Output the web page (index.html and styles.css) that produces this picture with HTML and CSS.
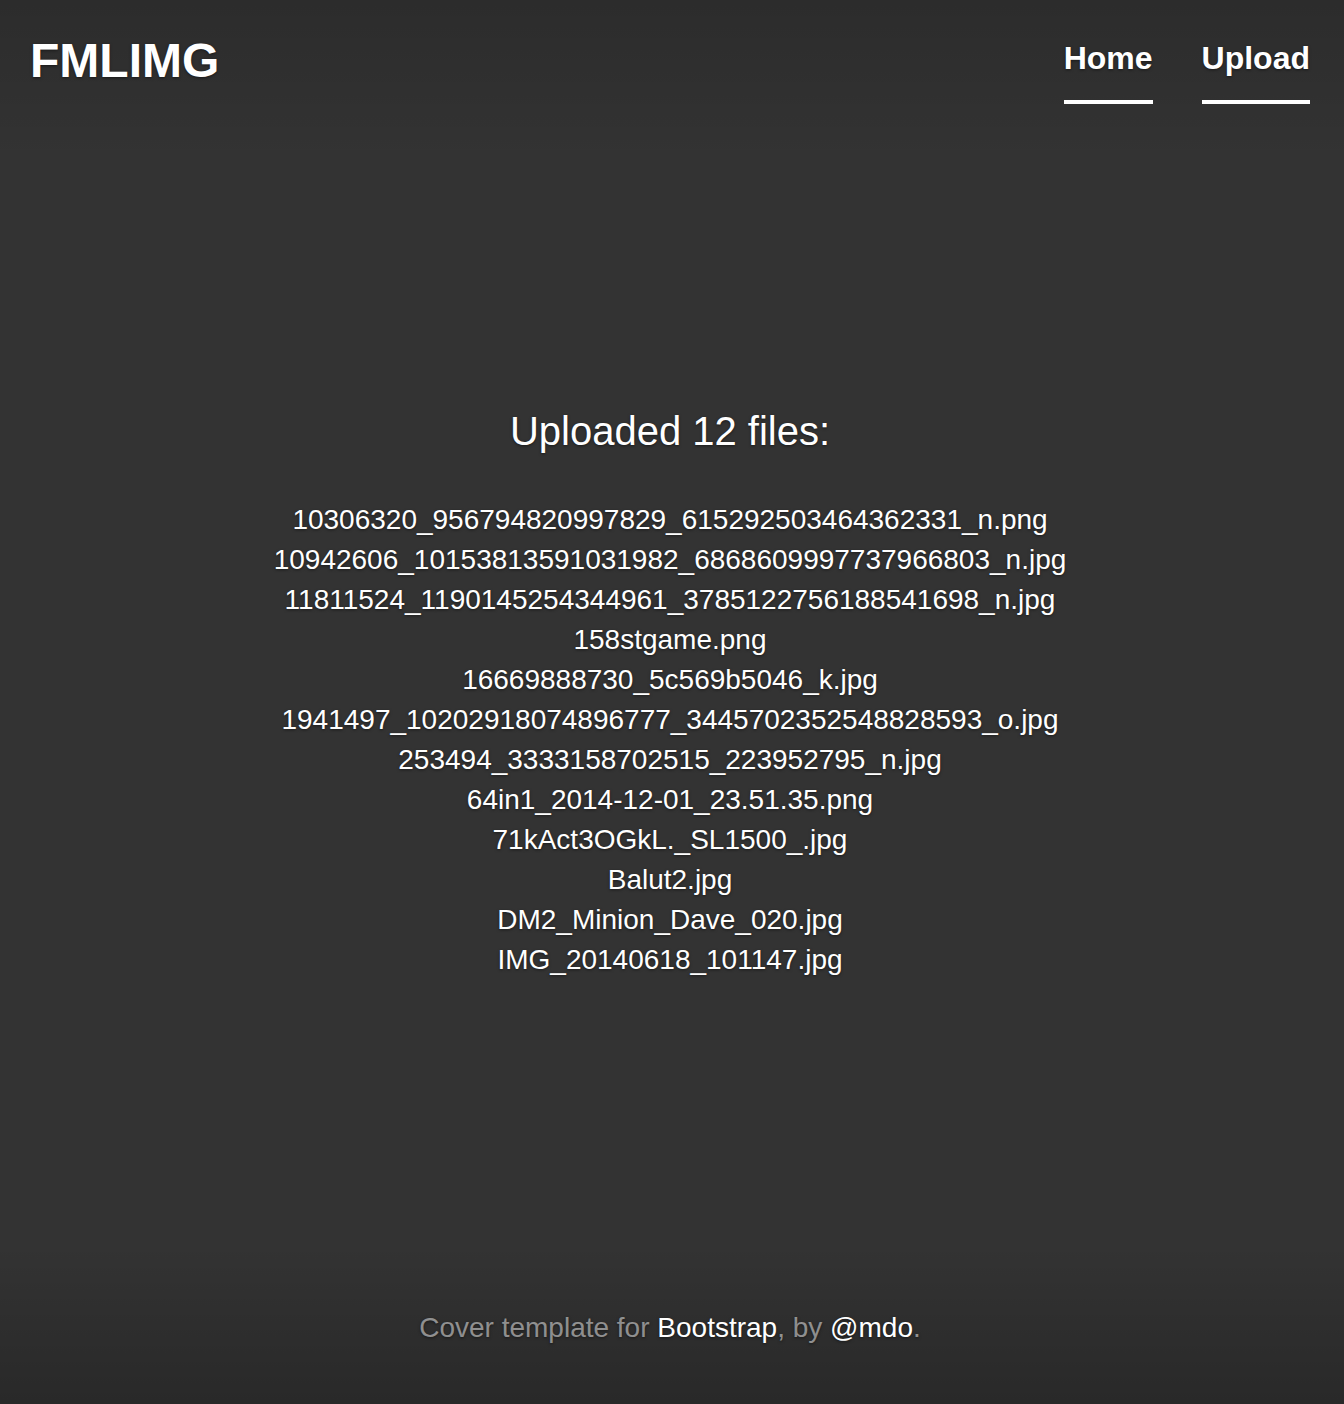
FILE: index.html
```html
<!DOCTYPE html>
<html lang="en">
<head>
<meta charset="utf-8">
<title>FMLIMG</title>
<link rel="stylesheet" href="styles.css">
</head>
<body>
<div class="site">
  <header class="masthead">
    <h3 class="brand">FMLIMG</h3>
    <nav class="nav">
      <a class="nav-link" href="#">Home</a>
      <a class="nav-link" href="#">Upload</a>
    </nav>
  </header>
  <main class="cover">
    <h1 class="cover-heading">Uploaded 12 files:</h1>
    <ul class="files">
      <li>10306320_956794820997829_615292503464362331_n.png</li>
      <li>10942606_10153813591031982_6868609997737966803_n.jpg</li>
      <li>11811524_1190145254344961_3785122756188541698_n.jpg</li>
      <li>158stgame.png</li>
      <li>16669888730_5c569b5046_k.jpg</li>
      <li>1941497_10202918074896777_3445702352548828593_o.jpg</li>
      <li>253494_3333158702515_223952795_n.jpg</li>
      <li>64in1_2014-12-01_23.51.35.png</li>
      <li>71kAct3OGkL._SL1500_.jpg</li>
      <li>Balut2.jpg</li>
      <li>DM2_Minion_Dave_020.jpg</li>
      <li>IMG_20140618_101147.jpg</li>
    </ul>
  </main>
  <footer class="mastfoot">
    <p>Cover template for <a href="#">Bootstrap</a>, by <a href="#">@mdo</a>.</p>
  </footer>
</div>
</body>
</html>
```

FILE: styles.css
```css
html, body {
  margin: 0;
  padding: 0;
  height: 100%;
}
body {
  background-color: #333;
  background-image:
    linear-gradient(to bottom, rgba(0,0,0,0.14) 0, rgba(0,0,0,0) 160px),
    linear-gradient(to top, rgba(0,0,0,0.2) 0, rgba(0,0,0,0) 160px);
  color: #fff;
  font-family: "Liberation Sans", Arial, Helvetica, sans-serif;
  text-shadow: 0 1px 3px rgba(0,0,0,0.5);
}
.site {
  min-height: 1404px;
  display: flex;
  flex-direction: column;
  padding: 0 34px 0 30px;
  box-sizing: border-box;
}
.masthead {
  display: flex;
  justify-content: space-between;
  align-items: flex-start;
  height: 104px;
}
.brand {
  margin: 37px 0 0;
  font-size: 48px;
  line-height: 48px;
  font-weight: 700;
}
.nav {
  display: flex;
  gap: 49px;
  margin-top: 42px;
}
.nav-link {
  color: #fff;
  text-decoration: none;
  font-size: 32px;
  line-height: 32px;
  font-weight: 700;
  padding-bottom: 26px;
  border-bottom: 4px solid #fff;
}
.cover {
  padding-top: 305px;
  text-align: center;
}
.cover-heading {
  margin: 0;
  font-size: 40px;
  line-height: 44px;
  font-weight: 400;
}
.files {
  list-style: none;
  margin: 47px 0 0;
  padding: 0;
  font-size: 28px;
  line-height: 40px;
}
.mastfoot {
  margin-top: auto;
  text-align: center;
  color: rgba(255,255,255,0.5);
  font-size: 28px;
  line-height: 40px;
  padding-bottom: 56px;
}
.mastfoot p {
  margin: 0;
}
.mastfoot a {
  color: #fff;
  text-decoration: none;
}
```
